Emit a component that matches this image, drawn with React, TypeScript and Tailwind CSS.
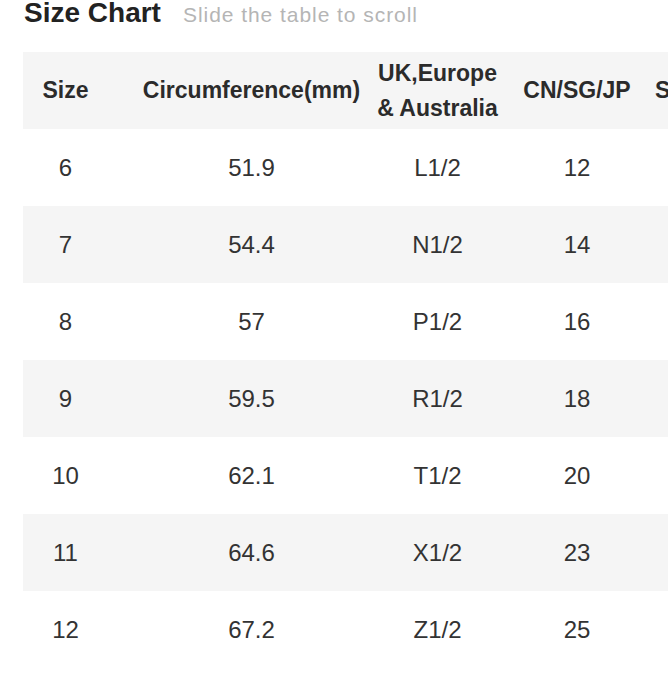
import React from "react";

const rows: [string, string, string, string, string][] = [
  ["6", "51.9", "L1/2", "12", "12"],
  ["7", "54.4", "N1/2", "14", "14.5"],
  ["8", "57", "P1/2", "16", "17"],
  ["9", "59.5", "R1/2", "18", "19.5"],
  ["10", "62.1", "T1/2", "20", "22"],
  ["11", "64.6", "X1/2", "23", "24.5"],
  ["12", "67.2", "Z1/2", "25", "27"],
];

function Row({
  cells,
  shaded,
}: {
  cells: React.ReactNode[];
  shaded?: boolean;
}) {
  return (
    <div
      className={
        "flex items-center h-[77px] " + (shaded ? "bg-[#f5f5f5]" : "bg-white")
      }
    >
      <div className="w-[85px] shrink-0 flex flex-col items-center justify-center whitespace-nowrap">
        {cells[0]}
      </div>
      <div className="w-[287px] shrink-0 flex flex-col items-center justify-center whitespace-nowrap">
        {cells[1]}
      </div>
      <div className="w-[85px] shrink-0 flex flex-col items-center justify-center whitespace-nowrap">
        {cells[2]}
      </div>
      <div className="ml-[43px] w-[108px] shrink-0 flex flex-col items-center justify-center whitespace-nowrap">
        {cells[3]}
      </div>
      <div className="ml-[24px] w-[130px] shrink-0 flex flex-col items-center justify-center whitespace-nowrap">
        {cells[4]}
      </div>
    </div>
  );
}

export default function App() {
  return (
    <div
      className="w-[668px] h-[700px] bg-white overflow-hidden pl-[23px]"
      style={{ fontFamily: '"Liberation Sans", Arial, sans-serif' }}
    >
      <div className="flex items-baseline h-[52px] pt-[1px] leading-[23.5px]">
        <span className="ml-[1px] text-[28px] font-bold text-[#222]">Size Chart</span>
        <span className="ml-[22px] text-[21px] tracking-[0.95px] text-[#b5b5b5]">
          Slide the table to scroll
        </span>
      </div>
      <div className="w-max">
        <Row
          shaded
          cells={[
            <span className="text-[23px] font-bold text-[#2b2b2b]">Size</span>,
            <span className="text-[23px] font-bold text-[#2b2b2b]">Circumference(mm)</span>,
            <div className="flex flex-col items-center text-[23px] font-bold text-[#2b2b2b] leading-[35px]">
              <span>UK,Europe</span>
              <span>&amp; Australia</span>
            </div>,
            <span className="text-[23px] font-bold text-[#2b2b2b]">CN/SG/JP</span>,
            <span className="text-[23px] font-bold text-[#2b2b2b] self-start">Switzerland</span>,
          ]}
        />
        {rows.map((r, i) => (
          <Row
            key={i}
            shaded={i % 2 === 1}
            cells={r.map((c, j) => (
              <span key={j} className="text-[24px] text-[#333]">
                {c}
              </span>
            ))}
          />
        ))}
      </div>
    </div>
  );
}
